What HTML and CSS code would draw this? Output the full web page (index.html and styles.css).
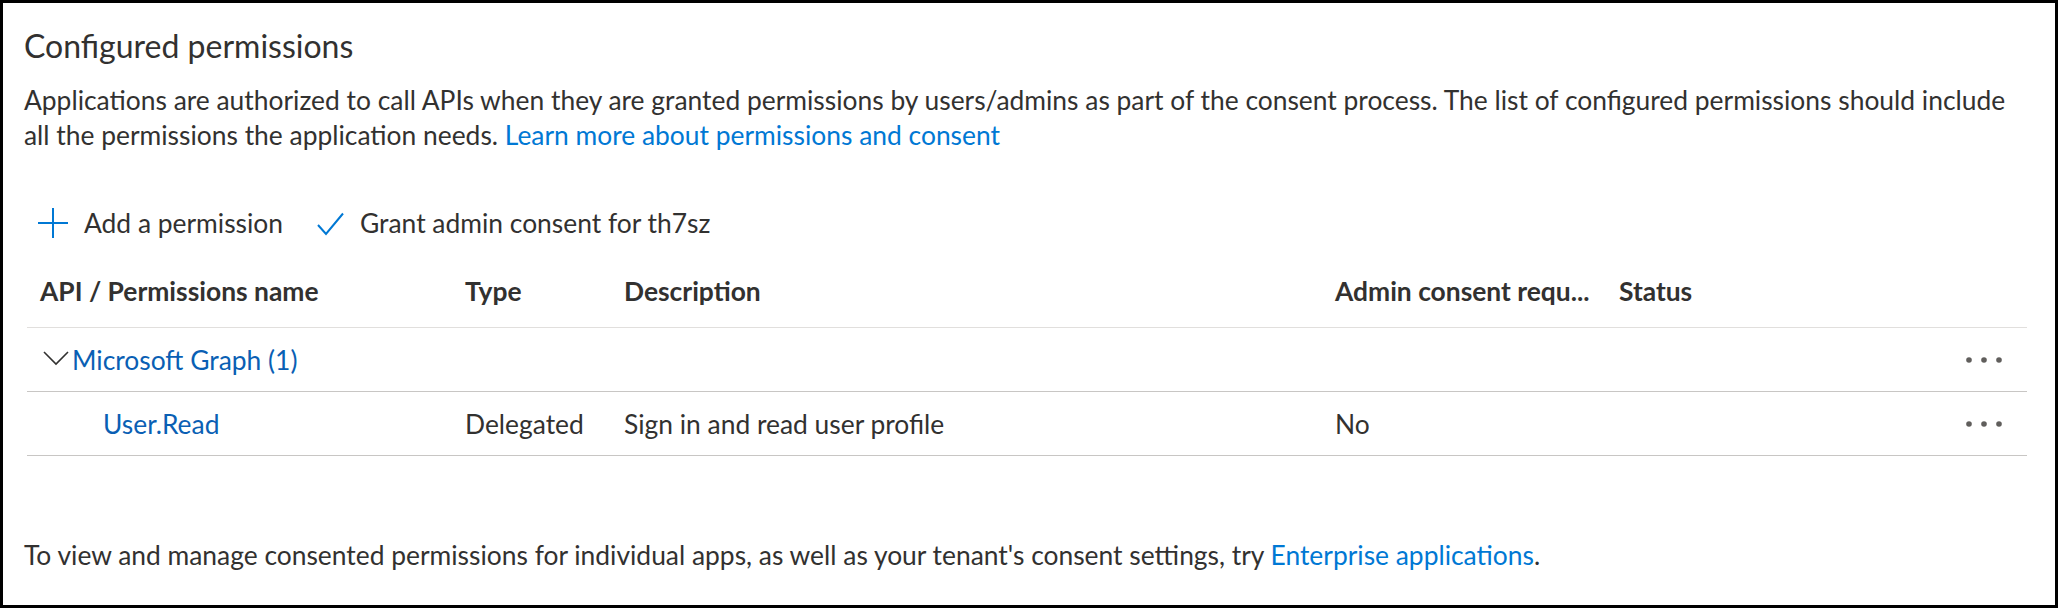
FILE: index.html
```html
<!DOCTYPE html>
<html lang="en">
<head>
<meta charset="utf-8">
<title>Configured permissions</title>
<link rel="stylesheet" href="styles.css">
</head>
<body>
<div class="panel">
  <h2 class="title">Configured permissions</h2>
  <p class="intro">Applications are authorized to call APIs when they are granted permissions by users/admins as part of the consent process. The list of configured permissions should include<br>all the permissions the application needs. <a class="link" href="#">Learn more about permissions and consent</a></p>

  <div class="toolbar">
    <button class="tb-btn">
      <svg class="tb-icon" viewBox="0 0 30 30" width="30" height="30" aria-hidden="true"><path d="M15 0V30M0 15H30" stroke="#0078d4" stroke-width="2" fill="none"/></svg>
      <span>Add a permission</span>
    </button>
    <button class="tb-btn">
      <svg class="tb-icon check" viewBox="0 0 27 24" width="27" height="24" aria-hidden="true"><path d="M1 13L9 22L26 1.5" stroke="#0078d4" stroke-width="2" fill="none"/></svg>
      <span>Grant admin consent for th7sz</span>
    </button>
  </div>

  <div class="table">
    <div class="row head">
      <div class="cell">API / Permissions name</div>
      <div class="cell">Type</div>
      <div class="cell">Description</div>
      <div class="cell">Admin consent requ...</div>
      <div class="cell">Status</div>
      <div class="cell"></div>
    </div>
    <div class="row group">
      <div class="cell group-name">
        <svg class="chev" viewBox="0 0 26 15" width="26" height="15" aria-hidden="true"><path d="M1 1L13 13L25 1" stroke="#323130" stroke-width="1.6" fill="none"/></svg>
        <a class="api-link" href="#">Microsoft Graph (1)</a>
      </div>
      <div class="cell"></div>
      <div class="cell"></div>
      <div class="cell"></div>
      <div class="cell"></div>
      <div class="cell more"><svg viewBox="0 0 36 6" width="36" height="6" aria-hidden="true"><circle cx="3" cy="3" r="2.8" fill="#605e5c"/><circle cx="18" cy="3" r="2.8" fill="#605e5c"/><circle cx="33" cy="3" r="2.8" fill="#605e5c"/></svg></div>
    </div>
    <div class="row item">
      <div class="cell perm-name"><a class="api-link" href="#">User.Read</a></div>
      <div class="cell">Delegated</div>
      <div class="cell">Sign in and read user profile</div>
      <div class="cell">No</div>
      <div class="cell"></div>
      <div class="cell more"><svg viewBox="0 0 36 6" width="36" height="6" aria-hidden="true"><circle cx="3" cy="3" r="2.8" fill="#605e5c"/><circle cx="18" cy="3" r="2.8" fill="#605e5c"/><circle cx="33" cy="3" r="2.8" fill="#605e5c"/></svg></div>
    </div>
  </div>

  <p class="footer">To view and manage consented permissions for individual apps, as well as your tenant's consent settings, try <a class="link" href="#">Enterprise applications</a>.</p>
</div>
</body>
</html>
```

FILE: styles.css
```css
* { box-sizing: border-box; }

html, body {
  margin: 0;
  padding: 0;
  background: #ffffff;
}

body {
  font-family: Lato, "Open Sans", "Liberation Sans", sans-serif;
  color: #323130;
}

.panel {
  width: 2058px;
  height: 608px;
  border: 3px solid #000000;
  padding: 23px 34px 0 21px;
  display: flex;
  flex-direction: column;
}

.title {
  margin: 0;
  font-size: 32px;
  line-height: 40px;
  font-weight: 400;
  color: #323130;
}

.intro {
  margin: 17px 0 0 0;
  font-size: 26.4px;
  line-height: 35px;
}

.link {
  color: #0078d4;
  text-decoration: none;
}

.api-link {
  color: #0a5fb4;
  text-decoration: none;
}

.toolbar {
  display: flex;
  align-items: center;
  gap: 34px;
  height: 48px;
  margin-top: 46px;
  padding-left: 14px;
}

.tb-btn {
  display: flex;
  align-items: center;
  gap: 16px;
  border: none;
  background: none;
  padding: 0;
  font-family: inherit;
  font-size: 26.4px;
  color: #323130;
}

.tb-btn .check {
  margin-top: 2px;
}

.table {
  margin-top: 7px;
  width: 2000px;
  margin-left: 3px;
}

.row {
  display: grid;
  grid-template-columns: 425px 159px 711px 284px 340px 64px;
  align-items: center;
  padding-left: 13px;
  border-bottom: 1px solid #c8c6c4;
  font-size: 26.4px;
}

.row.head {
  height: 74px;
  font-weight: 700;
  border-bottom-color: #e1dfdd;
}

.row.group {
  height: 64px;
}

.row.item {
  height: 64px;
}

.cell {
  white-space: nowrap;
}

.group-name {
  display: flex;
  align-items: center;
  gap: 3px;
  margin-left: 3px;
}

.chev {
  margin-top: -2px;
}

.perm-name {
  padding-left: 63px;
}

.more {
  display: flex;
  justify-content: flex-end;
  padding-right: 21px;
}

.footer {
  margin: 82px 0 0 0;
  font-size: 26.4px;
  line-height: 34px;
}
```
